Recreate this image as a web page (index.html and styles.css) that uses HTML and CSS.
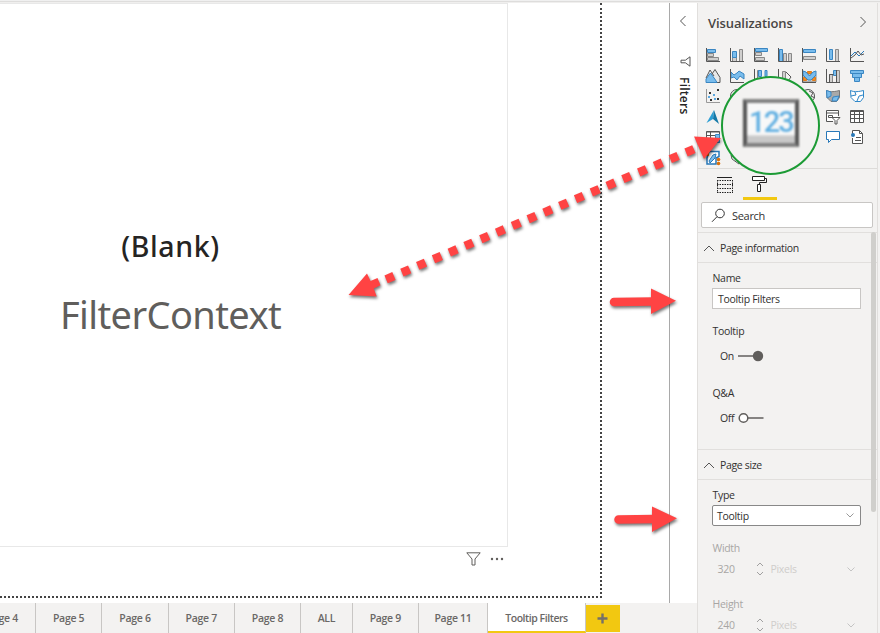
FILE: index.html
```html
<!DOCTYPE html>
<html lang="en">
<head>
<meta charset="utf-8">
<title>Report editor</title>
<link rel="stylesheet" href="styles.css">
</head>
<body>
<div class="app">
  <div class="left">
    <div class="work">
      <main class="canvas">
        <div class="page">
          <section class="card">
            <div class="value">(Blank)</div>
            <div class="label">FilterContext</div>
          </section>
          <div class="card-tools">
            <svg width="15" height="14" viewBox="0 0 15 14" fill="none" stroke="#605e5c"><path d="M.8.8h13.4L9 7v6H6V7z"/></svg>
            <svg width="14" height="4" viewBox="0 0 14 4" fill="#605e5c"><circle cx="2" cy="2" r="1.2"/><circle cx="7" cy="2" r="1.2"/><circle cx="12" cy="2" r="1.2"/></svg>
          </div>
        </div>
      </main>
      <aside class="filters">
        <svg class="chev" width="8" height="12" viewBox="0 0 8 12" fill="none" stroke="#555"><path d="M6.5 1 1.5 6l5 5"/></svg>
        <svg class="funnel" width="11" height="11" viewBox="0 0 11 11" fill="none" stroke="#555"><path d="M10 .8v9.4L5.400 6.800H1V4.200h4.400z"/></svg>
        <span class="filters-title">Filters</span>
      </aside>
    </div>
    <nav class="tabs">
      <div class="tab first">Page 4</div><div class="tab">Page 5</div><div class="tab">Page 6</div><div class="tab">Page 7</div><div class="tab">Page 8</div><div class="tab all">ALL</div><div class="tab">Page 9</div><div class="tab p11">Page 11</div><div class="tab active">Tooltip Filters</div>
      <div class="add"><svg width="11" height="11" viewBox="0 0 11 11" stroke="#757068" stroke-width="2.4"><path d="M5.5.5v10M.5 5.5h10"/></svg></div>
    </nav>
  </div>

  <aside class="viz">
    <header class="viz-head"><h1>Visualizations</h1>
      <svg width="8" height="12" viewBox="0 0 8 12" fill="none" stroke="#555"><path d="m1.5 1 5 5-5 5"/></svg>
    </header>
    <div class="icons">
      <svg viewBox="0 0 16 16"><g class="g"><path d="M2.5 6.500h6v3h-6zM2.500 10.500h11v3h-11z"/></g><path class="b" d="M2.500 2.500h8v3h-8z"/><path class="k" d="M1.500 1v13.500H15"/></svg>
      <svg viewBox="0 0 16 16"><path class="g" d="M3.500 9.500h4v5h-4zM10.500 2.500h3v12h-3z"/><path class="b" d="M3.500 4.500h4v6h-4z"/><path class="k" d="M1.500 1v13.500H15"/></svg>
      <svg viewBox="0 0 16 16"><path class="b" d="M2.500 1.500h12v3h-12z"/><path class="g" d="M2.500 5.500h6v3h-6zM2.500 10.500h9v3h-9z"/><path class="k" d="M1.500 1v13.500H15"/></svg>
      <svg viewBox="0 0 16 16"><path class="b" d="M2.500 2.500h3v12h-3z"/><path class="g" d="M6.500 6.500h3v8h-3zM11.500 6.500h3v8h-3z"/><path class="k" d="M1.500 1v13.500H15"/></svg>
      <svg viewBox="0 0 16 16"><path class="b" d="M2.500 2.500h12v3h-12z"/><path class="g" d="M2.500 9.500h12v3h-12z"/><path class="k" d="M1.500 1v14"/></svg>
      <svg viewBox="0 0 16 16"><path class="b" d="M4.500 2.500h3v10h-3z"/><path class="g" d="M10.500 2.500h3v12h-3z"/><path class="k" d="M1.500 1v13.500H15"/></svg>
      <svg viewBox="0 0 16 16"><path class="bl" d="m2 9 4-4 4 4 5-5"/><path class="k" d="M1.500 1v13.500H15M2 11l4-3 3-4 3 4 3-1"/></svg>

      <svg viewBox="0 0 16 16"><path class="k" fill="#e8e8e8" d="m5 9 5-7.500 5 8v5H8z"/><path class="b" d="M1 14.500V11l4.500-6 5 7 1.500 2.500z"/><path class="k" d="m1 10 4-8 4 6"/></svg>
      <svg viewBox="0 0 16 16"><path class="b" d="m2 4 3 3 3-2 2-2 5 3v5l-4-3-3 4-3-3-3 1z"/><path class="k" d="M1.500 1v13.500H15"/></svg>
      <svg viewBox="0 0 16 16"><path class="g" d="M4.500 2.500h3v12h-3z"/><path class="b" d="M5.500 2.500h3v6h-3zM12 2.500h2v6h-2z"/><path class="k" d="M1.500 1v13.500H15"/></svg>
      <svg viewBox="0 0 16 16"><path class="g" d="M5.500 3.500h3v8h-3z"/><path class="k" d="M1.500 1v13.500H15M9 4l5 5-3 4"/></svg>
      <svg viewBox="0 0 16 16"><path class="g" d="M2 7h13v7H2z"/><path class="o" d="M2.500 9.500h3v3h-3zM11.500 9.500h3v3h-3zM6.500 3.500h4v2h-4z"/><path class="b" d="m2 3 3 1 3.500 4L12 4l3-1v4l-5 5H7L2 7z"/><path class="k" d="M1.500 1v13.500H15"/></svg>
      <svg viewBox="0 0 16 16"><path class="g" d="M4.500 6.500h3v8h-3zM11.500 2.500h3v12h-3z"/><path class="b" d="M8.500 2.500h3v5h-3z"/><path class="k" d="M1.500 1v13.500H15M4.500 14V6.500h4M11.500 2v12"/></svg>
      <svg viewBox="0 0 16 16"><path class="b" d="M1.500 2.500h13v3h-13zM3.500 5.500h9v4h-9zM5.500 9.500h5v4h-5z"/></svg>

      <svg viewBox="0 0 16 16"><path class="gl" d="M1.500 1v13.500H15"/><path fill="#333" d="M4 4h2v2H4zM12 1h2v2h-2zM12 10h2v2h-2zM5 11h2v2H5z"/><path fill="#5aa8e0" d="M8 6h2v2H8zM3 8h2v2H3zM9 10h2v2H9z"/></svg>
      <svg viewBox="0 0 16 16"><circle class="k" cx="8" cy="8" r="6.500"/></svg>
      <i></i>
      <i></i>
      <svg viewBox="0 0 16 16"><circle class="k" cx="7" cy="8" r="6.500"/><path class="k" d="m8 3 4 2-2 3 4 2"/></svg>
      <svg viewBox="0 0 16 16"><path fill="#a9a9a9" stroke="#777" d="M1.500 2.500c4 2 9 1 13 0v7l-3 4H6l-4-4z"/><path class="b" d="M1.500 2.500 6 4v4l-4 2zM8 9l6-1-2 5H7z"/></svg>
      <svg viewBox="0 0 16 16"><path fill="#fff" stroke="#2f87c8" d="M1.500 2.500c4 2 9 1 13 0v7l-3 4H6l-4-4zM2 8l5-1-1-3M14 7l-4 1-2 5"/></svg>

      <svg viewBox="0 0 16 16"><path fill="#2e9fd4" d="M9 1 1.500 14 8 10z"/><path fill="#1579a8" d="m9 1 5 14-6-5z"/></svg>
      <i></i><i></i><i></i><i></i>
      <svg viewBox="0 0 16 16"><path class="w" d="M8 12.500H1.500v-11h12V7"/><path class="k" d="M1.500 4h12M3.500 6.500h4v2h-4z"/><path class="w" d="M7 8.500h8l-3 3V15h-2v-3.500z"/></svg>
      <svg viewBox="0 0 16 16"><path class="w" d="M1.500 1.500h13v12h-13z"/><path class="k" d="M1.500 2.500h13M1.500 5.500h13M1.500 9.500h13M5.500 2v11M10.500 2v11"/></svg>

      <svg viewBox="0 0 16 16"><path class="w" d="M1.500 2.500h13v11h-13z"/><path class="k" d="M1.500 3h13M1.500 6.500h13M1.500 10h13M5.500 3v11"/><path class="b" d="M10.500 5.500h4v8h-4z"/></svg>
      <i></i><i></i><i></i><i></i>
      <svg viewBox="0 0 16 16"><path fill="#fff" stroke="#2878b8" d="M1.500 2.500h13v8h-8l-3 3v-3h-2z"/></svg>
      <svg viewBox="0 0 16 16"><path class="w" d="M3.500 7V1.500h7l3 3v10h-10V9"/><path class="k" d="M10.500 1.500v3h3M7 8.500h5M6 11.500h6"/><circle cx="4" cy="6" r="2" fill="#2878b8"/></svg>

      <svg viewBox="0 0 16 16"><path fill="#fff" stroke="#2878b8" stroke-width="1.500" d="M4 1.500h10v5L11 8v6H2V8z"/><path fill="#79bcec" stroke="#2878b8" d="m8 5 3-1-1 4-5 5-1-2z"/><path fill="#d8700c" d="M1 2h3v4H1z"/><circle cx="13.500" cy="9.500" r="1.800" fill="#d8700c"/><circle cx="13.500" cy="13.500" r="1.800" fill="#d8700c"/></svg>
      <svg viewBox="0 0 16 16"><path class="w" d="m2 5 4-3 8 9-4 3-7-5z"/><path class="k" d="m4 7 6 6"/></svg>
    </div>
    <div class="modes">
      <svg width="18" height="18" viewBox="0 0 18 18" fill="none" stroke="#222"><path d="M1 1.500h15"/><path stroke-dasharray="1.500 1" d="M1 4.500h16M1 8.500h16M1 12.500h16M1 16.500h16M1.500 4v12M16.500 4v12"/></svg>
      <div class="mode-on"><svg width="17" height="18" viewBox="0 0 17 18" fill="#fff" stroke="#222"><path d="M1.500 1.500h12v4h-12z"/><path fill="none" d="M13.500 3.500h2v4h-7v2"/><path d="M6.500 9.500h3v7h-3z"/></svg></div>
    </div>
    <div class="search"><svg width="15" height="15" viewBox="0 0 15 15" fill="none" stroke="#333"><circle cx="9" cy="5.500" r="4.300"/><path d="M6 8.700 1 13.800"/></svg><span>Search</span></div>

    <div class="scroll">
      <div class="sec"><svg width="12" height="7" viewBox="0 0 12 7" fill="none" stroke="#555"><path d="m1 6 5-5 5 5"/></svg><span>Page information</span></div>
      <div class="info">
        <label class="name">Name</label>
        <div class="input"><span>Tooltip Filters</span></div>
        <label class="tip">Tooltip</label>
        <div class="toggle"><span>On</span><svg width="26" height="12" viewBox="0 0 26 12"><path stroke="#605e5c" stroke-width="1.500" d="M0 6h20"/><circle cx="20" cy="6" r="5.200" fill="#605e5c"/></svg></div>
        <label class="qa">Q&amp;A</label>
        <div class="toggle"><span>Off</span><svg width="26" height="12" viewBox="0 0 26 12"><path stroke="#605e5c" stroke-width="1.500" d="M10 6h15.500"/><circle cx="5.500" cy="6" r="4.300" fill="#fff" stroke="#605e5c" stroke-width="1.500"/></svg></div>
      </div>
      <div class="sec size"><svg width="12" height="7" viewBox="0 0 12 7" fill="none" stroke="#555"><path d="m1 6 5-5 5 5"/></svg><span>Page size</span></div>
      <div class="info">
        <label class="name">Type</label>
        <div class="input select"><span>Tooltip</span><svg width="8" height="5" viewBox="0 0 8 5" fill="none" stroke="#999"><path d="m.5.500 3.500 3.500L7.500.500"/></svg></div>
        <label class="dim">Width</label>
        <div class="num"><span class="n">320</span><svg width="8" height="14" viewBox="0 0 8 14" fill="none" stroke="#a0a0a0"><path d="M1 4l3-3 3 3M1 10l3 3 3-3"/></svg><span class="px">Pixels</span><svg class="dd" width="8" height="5" viewBox="0 0 8 5" fill="none" stroke="#c4c4c4"><path d="m.5.500 3.500 3.500L7.500.500"/></svg></div>
        <label class="dim h">Height</label>
        <div class="num"><span class="n">240</span><svg width="8" height="14" viewBox="0 0 8 14" fill="none" stroke="#a0a0a0"><path d="M1 4l3-3 3 3M1 10l3 3 3-3"/></svg><span class="px">Pixels</span><svg class="dd" width="8" height="5" viewBox="0 0 8 5" fill="none" stroke="#c4c4c4"><path d="m.5.500 3.500 3.500L7.500.500"/></svg></div>
      </div>
      <div class="thumb"></div>
    </div>
  </aside>
  <div class="edge"></div>
</div>

<div class="lens"><div class="lens-card"><span>123</span></div></div>
<svg class="arrows" width="880" height="633" viewBox="0 0 880 633" fill="#ff4343" stroke="none">
  <g class="shadow">
    <path d="M348.500 295 367 273.500l3.500 7.500 7-3 3 7.300-6.800 3.200 3 8z"/>
    <path d="M386.100 279.300 694 149.100" stroke="#ff4343" stroke-width="8.500" stroke-dasharray="8.500 8.640"/>
    <path d="M694 136.500 721 138l-17 21z"/>
    <path d="M614 302l40-.5" stroke="#ff4343" stroke-width="8.500" stroke-linecap="round"/>
    <path d="m651 288.500 25 12.300-25 13.200z"/>
    <path d="M618.500 519.500l36-.5" stroke="#ff4343" stroke-width="8.500" stroke-linecap="round"/>
    <path d="m652 506.500 25 11.800-25 13.700z"/>
  </g>
</svg>
</body>
</html>
```
FILE: styles.css
```css
* { box-sizing: border-box; }
body {
  margin: 0;
  width: 880px;
  height: 633px;
  overflow: hidden;
  position: relative;
  background: #fff;
  font: 10.5px/14px "Open Sans", "Noto Sans", sans-serif;
  color: #323130;
  letter-spacing: -0.3px;
}
svg { display: block; flex: none; }
h1 { margin: 0; }
.app {
  display: grid;
  grid-template-columns: 697px 181px 2px;
  grid-template-rows: 2px 630px;
  height: 633px;
  border-top: 1px solid #f0f0f0;
}
.app::before {
  content: "";
  grid-column: 1 / -1;
  height: 2px;
  background: linear-gradient(#dedddc 50%, #f0efee 50%);
}
.left { display: flex; flex-direction: column; }
.work { display: flex; height: 600px; }

.canvas { width: 669px; background: #fff; }
.page {
  width: 602px;
  height: 595px;
  border: 2px dotted #444;
  border-top: 0;
  border-left: 0;
}
.card {
  width: 508px;
  height: 544px;
  border: 1px solid #e8e8e8;
  border-left: 0;
  display: flex;
  flex-direction: column;
}
.value {
  width: 341px;
  margin-top: 222px;
  text-align: center;
  font: 500 28.5px/40px "Noto Sans", sans-serif;
  letter-spacing: 0.6px;
  color: #252423;
}
.label {
  width: 341px;
  margin-top: 21px;
  text-align: center;
  font: 38px/54px "Noto Sans", sans-serif;
  letter-spacing: -0.6px;
  color: #605e5c;
}
.card-tools {
  display: flex;
  align-items: center;
  gap: 9px;
  margin: 5px 0 0 466px;
}
.filters {
  width: 28px;
  border-left: 1px solid #a9a9a9;
  background: #fff;
  display: flex;
  flex-direction: column;
  align-items: center;
}
.chev { margin: 12px 1px 0 0; }
.funnel { margin: 29px 0 0 4px; }
.filters-title {
  writing-mode: vertical-rl;
  margin-top: 10px;
  font: 600 12px/18px "Open Sans", sans-serif;
  letter-spacing: 0.25px;
  color: #252423;
}

.tabs {
  display: flex;
  height: 30px;
  background: #f3f2f1;
  color: #6a6866;
  font-weight: 600;
}
.tab {
  width: 66.3px;
  border-right: 1px solid #c8c6c4;
  display: flex;
  align-items: center;
  justify-content: center;
  white-space: nowrap;
}
.tab.first { width: 36px; justify-content: flex-end; padding-right: 17px; }
.tab.all { width: 51.5px; }
.tab.p11 { width: 69px; }
.tab.active {
  width: 98px;
  padding-top: 2px;
  background: #fff;
  border-bottom: 2px solid #f2c811;
  letter-spacing: -0.45px;
}
.add {
  width: 34px;
  margin: 2px 0 1px;
  background: #f2c811;
  display: flex;
  align-items: center;
  justify-content: center;
}

.viz {
  background: #f3f2f1;
  border-left: 1px solid #e1dfdd;
  border-right: 1px solid #e1dfdd;
  overflow: hidden;
}
.edge { background: linear-gradient(#f3f2f1 73px, #ddd 73px, #ddd 74px, #f3f2f1 74px); }
.viz-head {
  height: 42px;
  padding: 0 10px;
  display: flex;
  align-items: center;
  justify-content: space-between;
}
.viz-head svg { margin-top: -5px; }
.viz-head h1 {
  margin-top: -2px;
  font: 600 13px/18px "Open Sans", sans-serif;
  letter-spacing: -0.1px;
  color: #484644;
}
.icons {
  display: grid;
  grid-template-columns: repeat(7, 24px);
  grid-template-rows: repeat(6, 20.5px);
  place-items: center;
  padding: 0 0 0 3px;
  height: 123px;
}
.icons svg { width: 16px; height: 16px; fill: none; }
.g { fill: #d0cfce; stroke: #888; }
.gl { stroke: #999; }
.b { fill: #79bcec; stroke: #3a86c2; }
.bl { stroke: #2878b8; }
.k { stroke: #555; }
.w { fill: #fff; stroke: #555; }
.o { fill: #f08a24; stroke: #e07b18; }
.modes {
  border-top: 1px solid #dddbd9;
  height: 32px;
  padding: 7px 0 0 18px;
  display: flex;
}
.mode-on {
  width: 34px;
  height: 24px;
  margin-left: 9px;
  padding-left: 8px;
  border-bottom: 3px solid #f2c811;
}
.mode-on svg { margin-top: -1px; }
.search {
  width: 172px;
  height: 26px;
  margin: 2px 0 0 3px;
  border: 1px solid #c8c6c4;
  border-radius: 2px;
  background: #fff;
  display: flex;
  align-items: center;
  padding-left: 9px;
  gap: 6px;
  font-size: 11px;
}
.search span { margin-top: 1px; }
.scroll {
  position: relative;
  margin-top: 4px;
}
.sec {
  height: 31px;
  border-top: 1px solid #e1dfdd;
  border-bottom: 1px solid #e1dfdd;
  display: flex;
  align-items: center;
  gap: 5px;
  padding: 1px 0 0 5px;
  letter-spacing: -0.35px;
}
.info {
  display: flex;
  flex-direction: column;
  padding-left: 14.5px;
}
.name { margin-top: 8px; }
.input {
  width: 149px;
  height: 21px;
  margin: 3px 0 0 -0.5px;
  border: 1px solid #c8c6c4;
  background: #fff;
  display: flex;
  align-items: center;
  padding-left: 5px;
}
.tip { margin-top: 15px; }
.toggle {
  display: flex;
  align-items: center;
  height: 14px;
  margin: 11px 0 0 7.5px;
}
.toggle span { width: 17.5px; }
.qa { margin-top: 23px; }
.size { margin-top: 24px; }
.select {
  border-color: #888;
  border-radius: 2px;
  padding: 0 6px 0 4px;
  justify-content: space-between;
}
.dim { margin-top: 15px; color: #a8a6a4; }
.num {
  display: flex;
  align-items: center;
  height: 14px;
  width: 149px;
  margin-top: 7px;
  padding: 0 7px 0 5px;
  color: #a8a6a4;
}
.n { width: 38px; }
.px { margin-left: 7px; color: #cfcdcb; }
.dd { margin-left: auto; }
.dim.h { margin-top: 21px; }
.thumb {
  position: absolute;
  right: 1px;
  top: 0;
  width: 5px;
  height: 280px;
  border-radius: 3px;
  background: #d0cfcc;
}

.lens {
  position: absolute;
  left: 721px;
  top: 76px;
  width: 99px;
  height: 99px;
  border: 2px solid #1c9b35;
  border-radius: 50%;
  background: #f3f2f1;
  padding: 21px 0 0 20px;
}
.lens-card {
  width: 56px;
  height: 48px;
  border: 4px solid #555;
  border-top-color: #808080;
  border-bottom-color: #808080;
  background: linear-gradient(#f8f8f8 78%, #c8c8c8 84%);
  filter: blur(1px);
  display: flex;
  justify-content: center;
}
.lens-card span {
  font: 500 29px/38px Roboto, sans-serif;
  letter-spacing: -1.8px;
  color: #62b0e2;
}
.arrows { position: absolute; left: 0; top: 0; }
.shadow { filter: drop-shadow(1px 2px 1.5px rgba(0, 0, 0, 0.55)); }
```
